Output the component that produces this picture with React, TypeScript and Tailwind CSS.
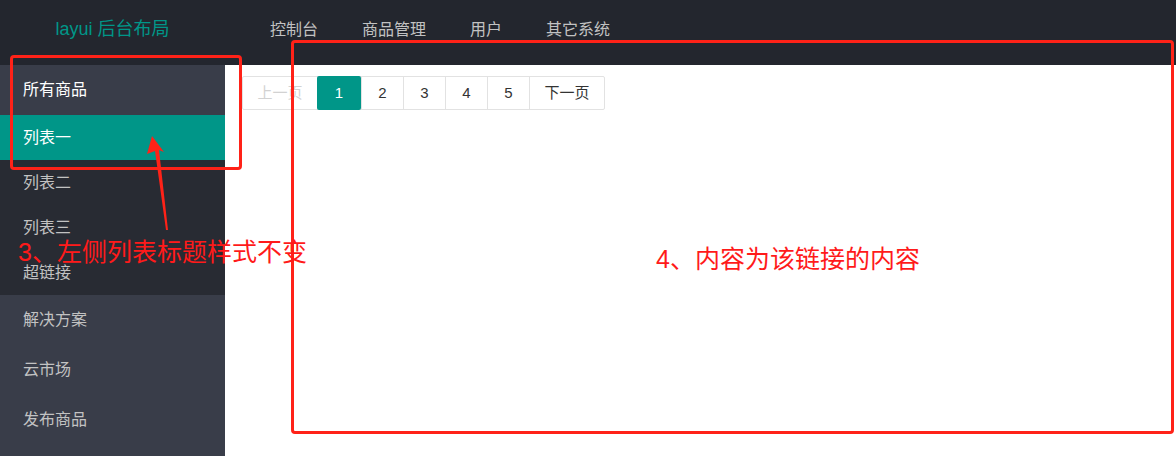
import React from "react";

const font = { fontFamily: '"Liberation Sans", "Noto Sans CJK SC", sans-serif' };

const navItems = ["控制台", "商品管理", "用户", "其它系统"];
const children = ["列表一", "列表二", "列表三", "超链接"];
const others = ["解决方案", "云市场", "发布商品"];

function Pager() {
  const cell = "h-full flex items-center justify-center border-l border-[#e2e2e2] first:border-l-0";
  return (
    <div className="flex h-[34px] w-fit border border-[#e2e2e2] rounded-[2px] text-[15px] text-[#333]">
      <span className={`${cell} w-[74px] text-[#d2d2d2]`}>上一页</span>
      <span className="w-[44px] flex items-center justify-center bg-[#009688] text-white rounded-[2px] -my-px h-[34px]">1</span>
      {["2", "3", "4", "5"].map((n) => (
        <span key={n} className={`${cell} w-[42px]`}>
          {n}
        </span>
      ))}
      <span className={`${cell} w-[75px]`}>下一页</span>
    </div>
  );
}

export default function App() {
  return (
    <div className="relative w-[1176px] h-[456px] overflow-hidden bg-white" style={font}>
      {/* header */}
      <div className="h-[65px] bg-[#23262e] flex items-center">
        <div className="w-[225px] text-center text-[18px] text-[#009688] -mt-[6px]">layui 后台布局</div>
        <div className="flex pl-[23px] -mt-[6px]">
          {navItems.map((t) => (
            <span key={t} className="px-[22px] text-[16px] text-[#c2c2c2]">
              {t}
            </span>
          ))}
        </div>
      </div>

      <div className="flex h-[391px]">
        {/* sidebar */}
        <div className="w-[225px] bg-[#393d49] text-[16px] text-[#c2c2c2]">
          <div className="h-[50px] flex items-center pl-[23px] text-white">所有商品</div>
          <div className="bg-[#282b33]">
            {children.map((c, i) => (
              <div
                key={c}
                className={`h-[45px] flex items-center pl-[23px] ${i === 0 ? "bg-[#009688] text-white" : ""}`}
              >
                {c}
              </div>
            ))}
          </div>
          {others.map((o) => (
            <div key={o} className="h-[50px] flex items-center pl-[23px]">
              {o}
            </div>
          ))}
        </div>

        {/* body */}
        <div className="flex-1 pl-[17px] pt-[11px]">
          <Pager />
        </div>
      </div>

      {/* annotations */}
      <div className="absolute left-[10px] top-[55px] w-[232px] h-[115px] border-[3px] border-[#ff2218] rounded-[4px]" />
      <div className="absolute left-[291px] top-[40px] w-[883px] h-[394px] border-[3px] border-[#ff2218] rounded-[4px]" />
      <svg className="absolute left-[140px] top-[130px]" width="40" height="110" viewBox="0 0 40 110">
        <path d="M12 6 L24 22 L19 20 L28 100 L26 100 L15 21 L7 24 Z" fill="#ff2218" />
      </svg>
      <div className="absolute left-[18px] top-[236px] text-[25px] leading-[32px] text-[#ff1a1a]">
        3、左侧列表标题样式不变
      </div>
      <div className="absolute left-[656px] top-[243px] text-[25px] leading-[32px] text-[#ff1a1a]">
        4、内容为该链接的内容
      </div>
    </div>
  );
}
